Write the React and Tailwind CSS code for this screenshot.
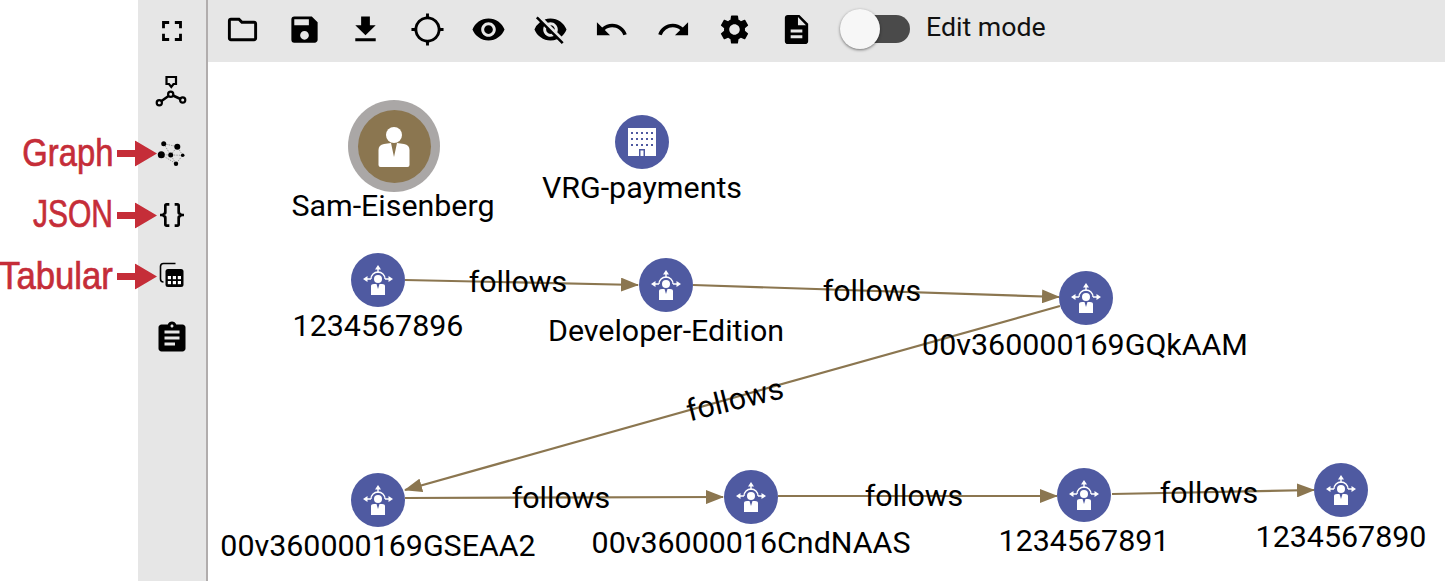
import React from 'react';
import {
  MdFullscreen,
  MdOutlineFolder,
  MdSave,
  MdFileDownload,
  MdGpsNotFixed,
  MdVisibility,
  MdVisibilityOff,
  MdUndo,
  MdRedo,
  MdSettings,
  MdDescription,
  MdAssignment,
} from 'react-icons/md';

const toolbarIcons = [
  MdOutlineFolder,
  MdSave,
  MdFileDownload,
  MdGpsNotFixed,
  MdVisibility,
  MdVisibilityOff,
  MdUndo,
  MdRedo,
  MdSettings,
  MdDescription,
];

const edges = [
  'M405 280 L638 285',
  'M693 285 L1059 297',
  'M1060 306 L405 490',
  'M405 498 L723 497',
  'M778 496 L1057 496',
  'M1112 494 L1314 490',
];

const nodes = [
  { id: 1, pos: 'left-[170px] top-[218px]' },
  { id: 2, pos: 'left-[458px] top-[223px]' },
  { id: 3, pos: 'left-[878px] top-[236px]' },
  { id: 4, pos: 'left-[170px] top-[438px]' },
  { id: 5, pos: 'left-[543px] top-[435px]' },
  { id: 6, pos: 'left-[876px] top-[433px]' },
  { id: 7, pos: 'left-[1133px] top-[428px]' },
];

const nodeLabels = [
  { text: 'Sam-Eisenberg', pos: 'left-[185px] top-[144px]' },
  { text: 'VRG-payments', pos: 'left-[434px] top-[126px]' },
  { text: '1234567896', pos: 'left-[170px] top-[264px]' },
  { text: 'Developer-Edition', pos: 'left-[458px] top-[269px]' },
  { text: '00v360000169GQkAAM', pos: 'left-[877px] top-[283px]' },
  { text: '00v360000169GSEAA2', pos: 'left-[170px] top-[484px]' },
  { text: '00v36000016CndNAAS', pos: 'left-[543px] top-[481px]' },
  { text: '1234567891', pos: 'left-[876px] top-[479px]' },
  { text: '1234567890', pos: 'left-[1133px] top-[475px]' },
];

const edgeLabels = [
  { pos: 'left-[310px] top-[220px]', tilt: '' },
  { pos: 'left-[664px] top-[229px]', tilt: '' },
  { pos: 'left-[527px] top-[338px]', tilt: '-rotate-[14deg]' },
  { pos: 'left-[353px] top-[436px]', tilt: '' },
  { pos: 'left-[706px] top-[434px]', tilt: '' },
  { pos: 'left-[1001px] top-[431px]', tilt: '' },
];

const HubNode = ({ pos }) => (
  <div className={`absolute ${pos} -translate-x-1/2 -translate-y-1/2 w-[54px] h-[54px] rounded-full bg-[#4f5aa1] flex items-center justify-center`}>
    <svg viewBox="-27 -27 54 54" className="w-[54px] h-[54px]" fill="none">
      <circle cx="0" cy="-1" r="4" fill="#fff" />
      <path d="M-7 -1 A7 7 0 0 1 7 -1" stroke="#fff" strokeWidth="1.4" />
      <path d="M0 -7 V-11 M-7 -1 H-11 M7 -1 H11" stroke="#fff" strokeWidth="1.4" />
      <path d="M0 -15 L3 -10.5 H-3 Z M-15 -1 L-10.5 -4 V2 Z M15 -1 L10.5 -4 V2 Z" fill="#fff" />
      <path d="M-7 6 Q-7 4 -4 4 L-1.5 4 L0 9 L1.5 4 L4 4 Q7 4 7 6 V15 H-7 Z" fill="#fff" />
    </svg>
  </div>
);

const PersonNode = () => (
  <div className="absolute left-[186px] top-[84px] -translate-x-1/2 -translate-y-1/2 w-[92px] h-[92px] rounded-full bg-[#aaa7a6] flex items-center justify-center">
    <div className="w-[73px] h-[73px] rounded-full bg-[#8b7650] flex items-center justify-center">
      <svg viewBox="-36 -36 72 72" className="w-[72px] h-[72px]">
        <circle cx="0" cy="-11" r="8" fill="#fff" />
        <path d="M-15.5 4 Q-15.5 -1 -10 -2 L-3 -3 L0 11 L3 -3 L10 -2 Q15.5 -1 15.5 4 V19 Q15.5 21 13.5 21 H-13.5 Q-15.5 21 -15.5 19 Z" fill="#fff" />
      </svg>
    </div>
  </div>
);

const BuildingNode = () => (
  <div className="absolute left-[434px] top-[80px] -translate-x-1/2 -translate-y-1/2 w-[54px] h-[54px] rounded-full bg-[#4f5aa1] flex items-center justify-center">
    <svg viewBox="-27 -27 54 54" className="w-[54px] h-[54px]">
      <rect x="-14" y="-14" width="28" height="28" fill="#fff" />
      <g fill="#4f5aa1">
        {[-10, -4, 2].flatMap((y) =>
          [-11, -6, -1, 4, 9].map((x) => <rect key={`${x}${y}`} x={x} y={y} width="2" height="2" />)
        )}
      </g>
      <rect x="-3" y="7" width="6" height="7" fill="#4f5aa1" />
      <rect x="-1.5" y="8.5" width="3" height="5.5" fill="#fff" />
    </svg>
  </div>
);

const Callout = ({ label, squeeze }) => (
  <div className="absolute right-[49px] top-1/2 -translate-y-1/2 flex items-center gap-[4px]">
    <span className={`font-['Liberation_Sans',sans-serif] text-[39px] leading-none text-[#c52d38] whitespace-nowrap origin-right -translate-y-[2px] [-webkit-text-stroke:0.7px_#c52d38] ${squeeze}`}>
      {label}
    </span>
    <svg viewBox="0 0 40 26" className="w-[40px] h-[26px]">
      <path d="M0 9.5 H18 V0 L40 13 L18 26 V16.5 H0 Z" fill="#c52d38" />
    </svg>
  </div>
);

const FlowIcon = () => (
  <svg viewBox="0 0 34 34" className="w-[34px] h-[34px]" fill="none" stroke="#000" strokeWidth="2.2">
    <path d="M11.5 2 H21 V9 H18.5 L16.3 12 L14 9 H11.5 Z" />
    <path d="M6.5 26 L13.5 21 M18 20.5 L25.5 24" strokeWidth="2.5" />
    <circle cx="15.7" cy="19.3" r="2.6" />
    <circle cx="4.3" cy="27.7" r="2.6" />
    <circle cx="27.7" cy="25" r="2.6" />
  </svg>
);

const GraphIcon = () => (
  <svg viewBox="0 0 32 32" className="w-[32px] h-[32px]">
    <path
      d="M7.7 5.7 L21.3 8.7 L26.7 17.3 L20 25.7 L14.7 17 L21.3 8.7 M5.3 16.7 L14.7 17 L26.7 17.3 M7.7 5.7 L14.7 17 M5.3 16.7 L20 25.7"
      fill="none"
      stroke="#8a8a8a"
      strokeWidth="0.8"
      strokeDasharray="1.5 1"
    />
    <circle cx="7.7" cy="5.7" r="2.5" />
    <circle cx="21.3" cy="8.7" r="3" />
    <circle cx="5.3" cy="16.7" r="3.5" />
    <circle cx="14.7" cy="17" r="2.5" />
    <circle cx="26.7" cy="17.3" r="1.8" />
    <circle cx="20" cy="25.7" r="2.2" />
  </svg>
);

const BracesIcon = () => (
  <svg viewBox="0 0 24 24" className="w-[32px] h-[32px]">
    <path d="M8,3A2,2 0 0,0 6,5V9A2,2 0 0,1 4,11H3V13H4A2,2 0 0,1 6,15V19A2,2 0 0,0 8,21H10V19H8V14A2,2 0 0,0 6,12A2,2 0 0,0 8,10V5H10V3M16,3A2,2 0 0,1 18,5V9A2,2 0 0,0 20,11H21V13H20A2,2 0 0,0 18,15V19A2,2 0 0,1 16,21H14V19H16V14A2,2 0 0,1 18,12A2,2 0 0,1 16,10V5H14V3H16Z" />
  </svg>
);

const TableIcon = () => (
  <svg viewBox="0 0 26 26" className="w-[26px] h-[26px] -translate-y-[2px]">
    <path d="M4.5 20 Q1.5 20 1.5 17 V4.5 Q1.5 1.5 4.5 1.5 H16.5" fill="none" stroke="#000" strokeWidth="1.6" />
    <rect x="6.5" y="7" width="18" height="18" rx="2.5" />
    <g fill="#fff">
      {[14, 19].flatMap((y) =>
        [8.8, 13.8, 18.8].map((x) => <rect key={`${x}${y}`} x={x} y={y} width="3.2" height="3.2" />)
      )}
    </g>
  </svg>
);

const sidebarItems = [
  { icon: <MdFullscreen size={34} /> },
  { icon: <FlowIcon /> },
  { icon: <GraphIcon />, label: 'Graph', squeeze: 'scale-x-[0.84]' },
  { icon: <BracesIcon />, label: 'JSON', squeeze: 'scale-x-[0.77]' },
  { icon: <TableIcon />, label: 'Tabular', squeeze: 'scale-x-[0.89]' },
  { icon: <MdAssignment size={36} /> },
];

const App = () => {
  return (
    <div className="flex w-[1445px] h-[581px] overflow-hidden bg-white text-black font-['Roboto',sans-serif]">
      <div className="w-[138px] shrink-0" />

      <aside className="w-[70px] shrink-0 bg-[#e6e6e6] border-r-2 border-[#b1adad]">
        {sidebarItems.map((item, i) => (
          <div key={i} className="relative h-[61.5px] flex items-center justify-center">
            {item.icon}
            {item.label && <Callout label={item.label} squeeze={item.squeeze} />}
          </div>
        ))}
      </aside>

      <main className="flex-1 flex flex-col">
        <div className="h-[62px] shrink-0 bg-[#e6e6e6] flex items-center pl-[4px] pb-[3px]">
          {toolbarIcons.map((Icon, i) => (
            <div key={i} className="w-[61.5px] flex justify-center">
              <Icon size={35} />
            </div>
          ))}
          <div className="relative ml-[23px] w-[60px] h-[28px] rounded-full bg-[#4a4a4a] -translate-y-[1px]">
            <div className="absolute -left-[10px] -top-[6px] w-[40px] h-[40px] rounded-full bg-[#f7f7f7] shadow-[0_1px_3px_rgba(0,0,0,0.5)]" />
          </div>
          <span className="ml-[16px] text-[26.7px] leading-none text-[#111] -translate-y-[2px]">Edit mode</span>
        </div>

        <div className="relative flex-1 text-[30.4px] leading-none">
          <svg viewBox="208 62 1237 519" className="absolute inset-0 w-[1237px] h-[519px]">
            <defs>
              <marker id="head" viewBox="0 0 18 14" refX="17" refY="7" markerWidth="18" markerHeight="14" markerUnits="userSpaceOnUse" orient="auto">
                <path d="M0 0 L18 7 L0 14 Z" fill="#8b7650" />
              </marker>
            </defs>
            {edges.map((d) => (
              <path key={d} d={d} fill="none" stroke="#8b7650" strokeWidth="2.2" markerEnd="url(#head)" />
            ))}
          </svg>

          <PersonNode />
          <BuildingNode />
          {nodes.map((n) => (
            <HubNode key={n.id} pos={n.pos} />
          ))}

          {nodeLabels.map((l) => (
            <span key={l.text} className={`absolute ${l.pos} -translate-x-1/2 -translate-y-1/2 whitespace-nowrap`}>
              {l.text}
            </span>
          ))}
          {edgeLabels.map((l) => (
            <span key={l.pos} className={`absolute ${l.pos} -translate-x-1/2 -translate-y-1/2 whitespace-nowrap ${l.tilt}`}>
              follows
            </span>
          ))}
        </div>
      </main>
    </div>
  );
};

export default App;
